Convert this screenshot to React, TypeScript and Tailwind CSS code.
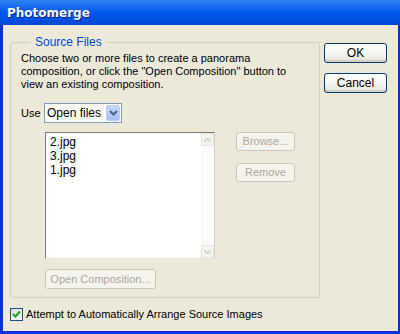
import React from "react";

const font = { fontFamily: '"Liberation Sans", Arial, sans-serif' };

function XPButton({ children, disabled, className = "" }: { children: React.ReactNode; disabled?: boolean; className?: string }) {
  return (
    <div
      className={
        "flex items-center justify-center rounded-[3px] border text-[11px] leading-none " +
        (disabled
          ? "border-[#cac8bb] bg-[#f5f4ea] text-[#aca899] "
          : "border-[#003c74] bg-gradient-to-b from-white via-[#f6f6f3] to-[#e3e2da] text-black shadow-[inset_0_-2px_0_#d6d0c5,inset_0_1px_0_#fff] ") +
        className
      }
    >
      {children}
    </div>
  );
}

export default function App() {
  return (
    <div className="w-[400px] h-[334px] bg-[#0831d9] flex flex-col overflow-hidden" style={font}>
      {/* Title bar */}
      <div className="h-[25px] shrink-0 bg-gradient-to-b from-[#2f80f0] via-[#0058ee] to-[#0048d4] flex items-center px-[7px]">
        <span className="text-white font-bold [text-shadow:1px_1px_0_#0a1e8c]" style={{ fontFamily: '"DejaVu Sans", "Liberation Sans", sans-serif', fontSize: 12 }}>
          Photomerge
        </span>
      </div>
      {/* Body */}
      <div className="flex-1 ml-[3px] mb-[3px] mr-[2px] bg-[#ece9d8] flex flex-row">
        <div className="flex flex-col pl-[7px] pt-[10px] w-[309px]">
          <fieldset className="border border-[#d0d0bf] rounded-[3px] h-[263px] w-[301px] pl-[10px] pr-[8px]">
            <legend className="text-[#0046d5] text-[12px] px-[5px] ml-[9px] leading-[14px]">Source Files</legend>
            <div className="text-[11px] leading-[13px] text-black mt-[3px] w-[290px]">
              Choose two or more files to create a panorama composition, or click the "Open Composition" button to view an existing composition.
            </div>
            <div className="flex items-center mt-[12px] h-[20px]">
              <span className="text-[11px] w-[23px]">Use</span>
              <div className="w-[78px] h-[20px] border border-[#7f9db9] bg-white flex items-center">
                <span className="flex-1 text-[12px] pl-[2px]">Open files</span>
                <div className="w-[14px] h-[16px] mr-[1px] rounded-[2px] bg-gradient-to-b from-[#c6d7fb] to-[#a7bff4] border border-[#b8cdf7] flex items-center justify-center">
                  <svg width="9" height="6" viewBox="0 0 9 6">
                    <path d="M1 1 L4.5 4.5 L8 1" fill="none" stroke="#4d6185" strokeWidth="2" />
                  </svg>
                </div>
              </div>
            </div>
            <div className="flex flex-row mt-[9px] ml-[24px]">
              <div className="w-[170px] h-[127px] border border-t-[#7a7a7a] border-l-[#7a7a7a] border-r-[#d4d0c8] border-b-[#e8e6dc] bg-white flex flex-row">
                <div className="flex-1 pl-[4px] pt-[2px] text-[12px] leading-[14px] text-black">
                  <div>2.jpg</div>
                  <div>3.jpg</div>
                  <div>1.jpg</div>
                </div>
                <div className="w-[13px] bg-[#fbfbf9] flex flex-col justify-between">
                  <div className="h-[13px] border border-[#e8e8e0] bg-[#f3f3ee] flex items-center justify-center">
                    <svg width="7" height="4" viewBox="0 0 7 4"><path d="M0.5 3.5 L3.5 0.5 L6.5 3.5" fill="none" stroke="#c9c8c0" strokeWidth="1.2" /></svg>
                  </div>
                  <div className="h-[13px] border border-[#e8e8e0] bg-[#f3f3ee] flex items-center justify-center">
                    <svg width="7" height="4" viewBox="0 0 7 4"><path d="M0.5 0.5 L3.5 3.5 L6.5 0.5" fill="none" stroke="#c9c8c0" strokeWidth="1.2" /></svg>
                  </div>
                </div>
              </div>
              <div className="flex flex-col ml-[21px] gap-[12px]">
                <XPButton disabled className="w-[59px] h-[19px]">Browse...</XPButton>
                <XPButton disabled className="w-[59px] h-[19px]">Remove</XPButton>
              </div>
            </div>
            <XPButton disabled className="w-[111px] h-[20px] mt-[10px] ml-[24px]">Open Composition...</XPButton>
          </fieldset>
          <div className="flex items-center mt-[8px]">
            <div className="w-[13px] h-[13px] border border-[#1c5180] bg-gradient-to-br from-[#dcdcd7] to-white flex items-center justify-center">
              <svg width="9" height="9" viewBox="0 0 9 9">
                <path d="M1 4 L3.5 6.5 L8 1.5" fill="none" stroke="#21a121" strokeWidth="2" />
              </svg>
            </div>
            <span className="text-[11px] ml-[3px]">Attempt to Automatically Arrange Source Images</span>
          </div>
        </div>
        <div className="flex flex-col pt-[18px] pl-[12px] gap-[10px]">
          <XPButton className="w-[63px] h-[20px] text-[12px]">OK</XPButton>
          <XPButton className="w-[63px] h-[20px] text-[12px]">Cancel</XPButton>
        </div>
      </div>
    </div>
  );
}
